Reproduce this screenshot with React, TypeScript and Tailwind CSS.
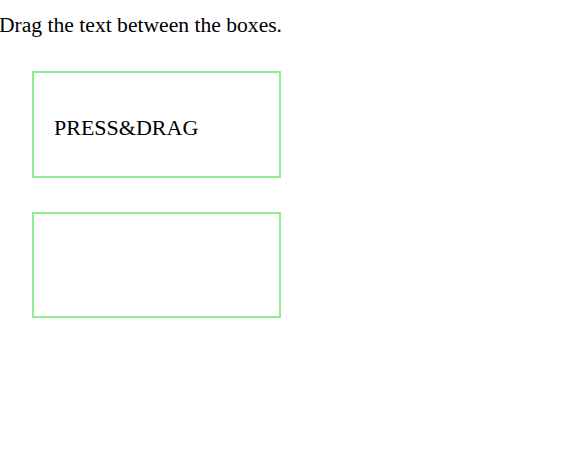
export default function App() {
  return (
    <div className="min-h-screen bg-white text-black font-['Liberation_Serif',serif]">
      <p className="pt-[13px] text-[21.6px] leading-[25px] -ml-[1px]">Drag the text between the boxes.</p>

      <div className="ml-[32px] mt-[33px] flex flex-col gap-[34px]">
        {/* drop zone 1 */}
        <div className="w-[249px] h-[107px] border-2 border-[#90ee90] pl-[20px] pt-[42px]">
          <span className="text-[22px] leading-[25px]">PRESS&amp;DRAG</span>
        </div>
        {/* drop zone 2 */}
        <div className="w-[249px] h-[106px] border-2 border-[#90ee90]"></div>
      </div>
    </div>
  )
}
